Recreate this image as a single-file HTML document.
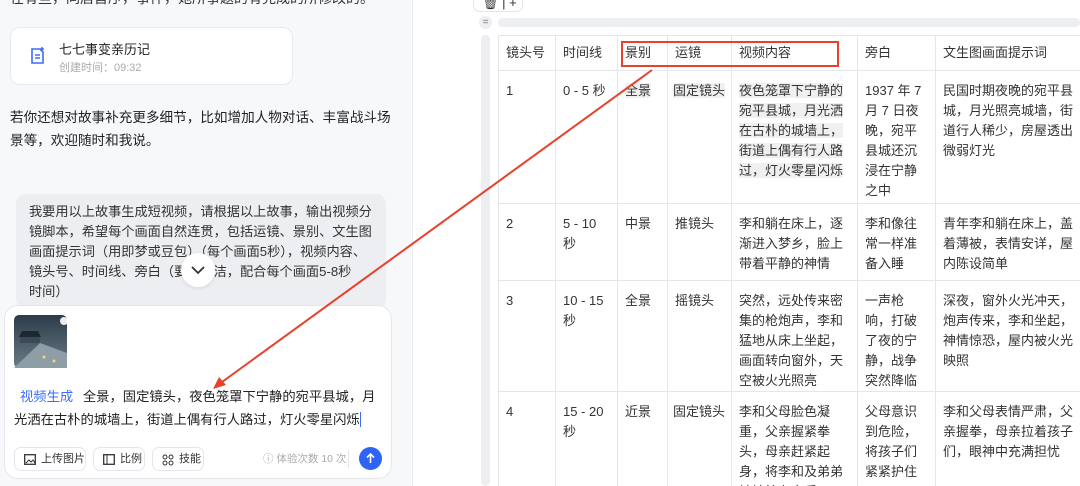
<html><head><style>
*{margin:0;padding:0;box-sizing:border-box}
html,body{width:1080px;height:486px;overflow:hidden}
body{background:#fff;font-family:"Liberation Sans","Noto Sans CJK SC",sans-serif;color:#222;position:relative}
.a{position:absolute}
#left{left:0;top:0;width:412px;height:486px;background:#f7f8fa}
table{border-collapse:collapse;table-layout:fixed;font-size:13px;color:#333}
td{border:1px solid #e6e6e6;vertical-align:top;padding:10px 8px 0 7px;line-height:20px;overflow:hidden}
.hl{background:#f0f0f0}
.c{height:86px;overflow:hidden}
.btn{border:1px solid #e5e6eb;border-radius:7px;height:24px;top:447px;font-size:11px;line-height:22px;padding-left:26px;background:#fff;color:#333}
</style></head><body>
<div id="left" class="a">
 <div class="a" style="left:10px;top:-12px;font-size:14px;color:#333;white-space:nowrap">在有些，同居首序，事件，她所事题的有完成的所修改的。</div>
 <div class="a" style="left:10px;top:27px;width:283px;height:58px;background:#fff;border:1px solid #e8eaf0;border-radius:10px"></div>
 <svg class="a" style="left:30px;top:47px" width="16" height="18" viewBox="0 0 16 18"><path d="M2 2h8l3 3v11H2z" fill="none" stroke="#3b6df6" stroke-width="1.6"/><path d="M5 8h5M5 11h5" stroke="#3b6df6" stroke-width="1.5"/><path d="M12 0v4M10 2h4" stroke="#3b6df6" stroke-width="1.4"/></svg>
 <div class="a" style="left:59px;top:39px;font-size:13px;color:#222">七七事变亲历记</div>
 <div class="a" style="left:59px;top:59px;font-size:11px;color:#aaa">创建时间：09:32</div>
 <div class="a" style="left:10px;top:106px;white-space:nowrap;font-size:13.6px;line-height:23px;color:#222">若你还想对故事补充更多细节，比如增加人物对话、丰富战斗场<br>景等，欢迎随时和我说。</div>
 <div class="a" style="left:16px;top:194px;width:370px;height:115px;background:#eceef1;border-radius:10px;padding:8px 4px 0 13px;font-size:13.2px;line-height:20px;color:#333;white-space:nowrap">我要用以上故事生成短视频，请根据以上故事，输出视频分<br>镜脚本，希望每个画面自然连贯，包括运镜、景别、文生图<br>画面提示词（用即梦或豆包）（每个画面5秒），视频内容、<br>镜头号、时间线、旁白（要求简洁，配合每个画面5-8秒<br>时间）</div>
 <div class="a" style="left:181px;top:253px;width:34px;height:34px;border-radius:50%;background:#fff;box-shadow:0 1px 4px rgba(0,0,0,.1)"><svg width="34" height="34"><path d="M11 14l6 6 6-6" fill="none" stroke="#333" stroke-width="1.8"/></svg></div>
 <div class="a" style="left:4px;top:305px;width:388px;height:174px;background:#fff;border:1px solid #e5e6eb;border-radius:14px"></div>
 <svg class="a" style="left:14px;top:315px" width="53" height="53"><defs><linearGradient id="g" x1="0" y1="0" x2="0" y2="1"><stop offset="0" stop-color="#2c3b4a"/><stop offset="1" stop-color="#6b7c86"/></linearGradient></defs><rect width="53" height="53" rx="5" fill="url(#g)"/><path d="M6 22h20v6H6z" fill="#3d4a55"/><path d="M8 16h16l3 6H5z" fill="#1e2830"/><path d="M0 53L26 28l27 10v15z" fill="#8e9ea6"/><circle cx="50" cy="6" r="4" fill="#eee"/><circle cx="30" cy="42" r="1.5" fill="#f5d47a"/><circle cx="40" cy="46" r="1.5" fill="#f5d47a"/></svg>
 <div class="a" style="left:14px;top:385px;width:370px;font-size:13.3px;line-height:23px;color:#222"><span style="color:#3b6df6;padding:0 6px">视频生成</span> 全景，固定镜头，夜色笼罩下宁静的宛平县城，月光洒在古朴的城墙上，街道上偶有行人路过，灯火零星闪烁<span style="border-left:1.5px solid #3b6df6"></span></div>
 <div class="a btn" style="left:14px;width:72px">上传图片<svg class="a" style="left:9px;top:6px" width="12" height="11"><rect x=".7" y=".7" width="10.6" height="9.6" fill="none" stroke="#333" stroke-width="1.3"/><path d="M2 9l3-3 2 2 2-2 2 3" fill="none" stroke="#333"/></svg></div>
 <div class="a btn" style="left:93px;width:52px">比例<svg class="a" style="left:9px;top:6px" width="12" height="11"><rect x=".7" y=".7" width="10.6" height="9.6" fill="none" stroke="#333" stroke-width="1.3"/><path d="M4 1v9" stroke="#333"/></svg></div>
 <div class="a btn" style="left:152px;width:52px">技能<svg class="a" style="left:9px;top:6px" width="12" height="12"><circle cx="3" cy="3" r="2" fill="none" stroke="#333"/><circle cx="9" cy="3" r="2" fill="none" stroke="#333"/><circle cx="3" cy="9" r="2" fill="none" stroke="#333"/><circle cx="9" cy="9" r="2" fill="none" stroke="#333"/></svg></div>
 <div class="a" style="left:263px;top:451px;font-size:10.5px;color:#aaa">ⓘ 体验次数 10 次</div>
 <div class="a" style="left:348px;top:450px;width:1px;height:18px;background:#e5e6eb"></div>
 <div class="a" style="left:359px;top:447px;width:23px;height:23px;border-radius:50%;background:#2e64f6"><svg width="23" height="23"><path d="M11.5 16V7M8 10.5l3.5-3.5 3.5 3.5" fill="none" stroke="#fff" stroke-width="1.6"/></svg></div>
</div>
<div class="a" style="left:412px;top:0;width:1px;height:486px;background:#eee"></div>
<div class="a" style="left:473px;top:-6px;width:50px;height:18px;border:1px solid #e5e6eb;border-radius:7px;background:#fff;font-size:13px;line-height:16px;padding-left:8px;color:#333">🗑︎ | +</div>
<div class="a" style="left:479px;top:16px;width:13px;height:13px;border-radius:50%;background:#eceef1;font-size:10px;text-align:center;line-height:13px;color:#777">=</div>
<div class="a" style="left:498px;top:18px;width:582px;height:9px;border-radius:5px;background:#eceef1"></div>
<div class="a" style="left:481px;top:35px;width:9px;height:451px;border-radius:5px;background:#eceef1"></div>
<div class="a" style="left:498px;top:35px;width:582px;height:451px;overflow:hidden">
<table class="a" style="left:0;top:0;width:620px">
<colgroup><col style="width:57px"><col style="width:62px"><col style="width:50px"><col style="width:64px"><col style="width:126px"><col style="width:78px"><col style="width:183px"></colgroup>
<tr style="height:35px"><td style="padding-top:7px">镜头号</td><td style="padding-top:7px">时间线</td><td style="padding-top:7px">景别</td><td style="padding-top:7px">运镜</td><td style="padding-top:7px">视频内容</td><td style="padding-top:7px">旁白</td><td style="padding-top:7px">文生图画面提示词</td></tr>
<tr style="height:133px"><td>1</td><td>0 - 5 秒</td><td><span class="hl">全景</span></td><td style="padding-left:5px;padding-right:0;white-space:nowrap"><span class="hl">固定镜头</span></td><td style="padding-right:4px"><span class="hl">夜色笼罩下宁静的宛平县城，月光洒在古朴的城墙上，街道上偶有行人路过，灯火零星闪烁</span></td><td style="padding-right:12px">1937 年 7 月 7 日夜晚，宛平县城还沉浸在宁静之中</td><td style="padding-right:40px">民国时期夜晚的宛平县城，月光照亮城墙，街道行人稀少，房屋透出微弱灯光</td></tr>
<tr style="height:77px"><td>2</td><td style="padding-right:12px">5 - 10 秒</td><td>中景</td><td>推镜头</td><td style="padding-right:4px">李和躺在床上，逐渐进入梦乡，脸上带着平静的神情</td><td style="padding-right:12px">李和像往常一样准备入睡</td><td style="padding-right:40px">青年李和躺在床上，盖着薄被，表情安详，屋内陈设简单</td></tr>
<tr style="height:110px"><td>3</td><td style="padding-right:12px">10 - 15 秒</td><td>全景</td><td>摇镜头</td><td style="padding-right:4px">突然，远处传来密集的枪炮声，李和猛地从床上坐起，画面转向窗外，天空被火光照亮</td><td style="padding-right:12px">一声枪响，打破了夜的宁静，战争突然降临</td><td style="padding-right:40px">深夜，窗外火光冲天，炮声传来，李和坐起，神情惊恐，屋内被火光映照</td></tr>
<tr style="height:96px"><td>4</td><td style="padding-right:12px">15 - 20 秒</td><td>近景</td><td style="padding-left:5px;padding-right:0;white-space:nowrap">固定镜头</td><td style="padding-right:4px"><div class="c">李和父母脸色凝重，父亲握紧拳头，母亲赶紧起身，将李和及弟弟妹妹护在身后</div></td><td style="padding-right:12px">父母意识到危险，将孩子们紧紧护住</td><td style="padding-right:40px">李和父母表情严肃，父亲握拳，母亲拉着孩子们，眼神中充满担忧</td></tr>
</table>
</div>
<div class="a" style="left:621px;top:41px;width:218px;height:26px;border:2px solid #e8412c"></div>
<svg class="a" style="left:0;top:0" width="1080" height="486"><path d="M652 70L222 382" stroke="#e8412c" stroke-width="2"/><path d="M213 389l6-12 7 8z" fill="#e8412c"/></svg>
</body></html>
